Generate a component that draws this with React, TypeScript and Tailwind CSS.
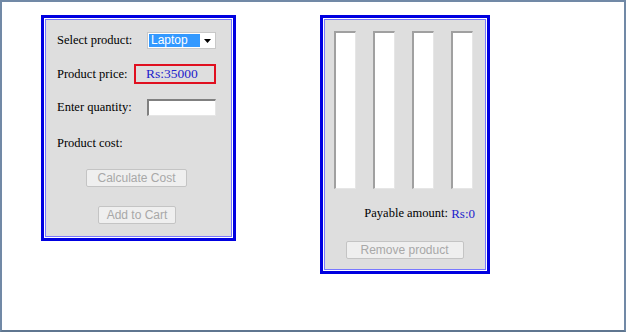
import React from "react";

const serif = { fontFamily: '"Liberation Serif", "Times New Roman", serif' };
const sans = { fontFamily: '"Liberation Sans", Arial, sans-serif' };

function Panel({ children }: { children: React.ReactNode }) {
  return (
    <div className="border-[3px] border-[#0000e0] bg-white p-px">
      <div className="border border-[#7878ff] bg-[#dedede]">{children}</div>
    </div>
  );
}

function DisabledButton({ label, w }: { label: string; w: string }) {
  return (
    <div
      className={`${w} h-[18px] flex items-center justify-center border border-[#c4c4c4] rounded-[2px] bg-[#efefef] text-[12px] text-[#a8a8a8]`}
      style={sans}
    >
      {label}
    </div>
  );
}

function Bar() {
  return <div className="w-[22px] h-[158px] bg-white border-t-2 border-l-2 border-t-[#a0a0a0] border-l-[#a0a0a0] border-r border-b border-r-[#e6e6e6] border-b-[#e6e6e6]" />;
}

export default function App() {
  return (
    <div className="w-[626px] h-[332px] bg-white border-2 border-[#7189a6] border-b-[#5f7690] overflow-hidden" style={serif}>
      <div className="flex items-start pl-[39px] pt-[13px]">
        <div className="w-[195px]">
          <Panel>
            <div className="pl-[11px] pt-[12px] pb-[12px] text-[12.5px] text-black">
              <div className="flex items-center h-[17px]">
                <div className="w-[90px]">Select product:</div>
                <div className="w-[69px] h-[17px] bg-white border border-[#c8c8c8] flex items-center pl-[1px]">
                  <div className="w-[51px] h-[13px] bg-[#3399ff] text-white text-[12px] leading-[13px] pl-[2px]" style={sans}>Laptop</div>
                  <div className="flex-1 flex justify-center">
                    <svg width="7" height="4" viewBox="0 0 7 4"><path d="M0 0h7L3.5 4z" fill="#000" /></svg>
                  </div>
                </div>
              </div>
              <div className="flex items-center h-[20px] mt-[15px]">
                <div className="w-[77px]">Product price:</div>
                <div className="w-[82px] h-[20px] border-2 border-[#e01020] flex items-center pl-[10px] text-[13.5px] text-[#2222cc]">Rs:35000</div>
              </div>
              <div className="flex items-center h-[17px] mt-[15px]">
                <div className="w-[90px]">Enter quantity:</div>
                <div className="w-[69px] h-[17px] bg-white border-t-2 border-l-2 border-t-[#808080] border-l-[#808080] border-r border-b border-r-[#e6e6e6] border-b-[#e6e6e6]" />
              </div>
              <div className="flex items-center h-[17px] mt-[19px]">
                <div>Product cost:</div>
              </div>
              <div className="flex mt-[17px] pl-[29px]">
                <DisabledButton label="Calculate Cost" w="w-[101px]" />
              </div>
              <div className="flex mt-[19px] pl-[41px]">
                <DisabledButton label="Add to Cart" w="w-[78px]" />
              </div>
            </div>
          </Panel>
        </div>
        <div className="w-[170px] ml-[84px]">
          <Panel>
            <div className="pl-[9px] pr-[10px] pt-[11px] pb-[10px]">
              <div className="flex gap-[17px]">
                <Bar />
                <Bar />
                <Bar />
                <Bar />
              </div>
              <div className="flex justify-end items-center h-[17px] mt-[16px] text-[12.5px] text-black">
                Payable amount:&nbsp;<span className="text-[#2222cc] text-[13px]">Rs:0</span>
              </div>
              <div className="flex justify-center mt-[19px]">
                <DisabledButton label="Remove product" w="w-[118px]" />
              </div>
            </div>
          </Panel>
        </div>
      </div>
    </div>
  );
}
